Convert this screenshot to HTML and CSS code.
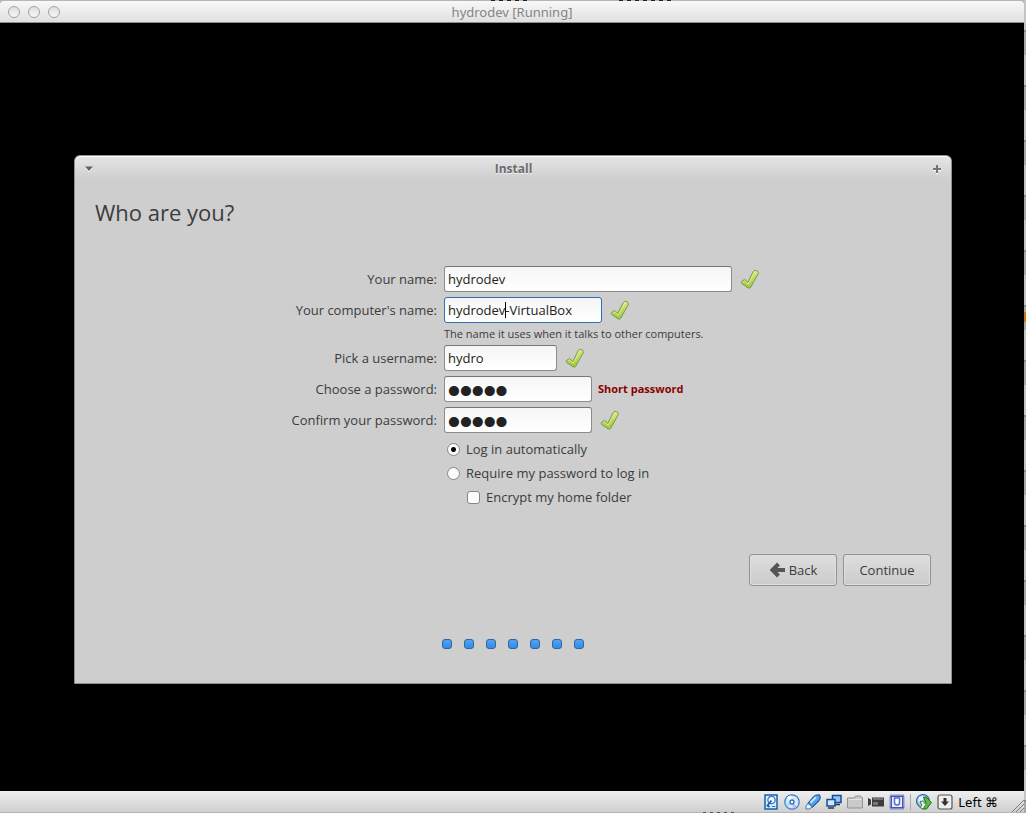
FILE: index.html
```
<!DOCTYPE html>
<html lang="en">
<head>
<meta charset="utf-8">
<title>hydrodev [Running]</title>
<link rel="stylesheet" href="styles.css">
</head>
<body>
<svg class="defs" aria-hidden="true">
  <defs>
    <linearGradient id="leaf" x1="0" y1="0" x2="0" y2="1"><stop offset="0" stop-color="#d9ec7c"/><stop offset="1" stop-color="#a3c639"/></linearGradient>
    <symbol id="tick" viewBox="0 0 20 20"><path d="M1.5 12.500 L4.500 10.400 L7.800 13.400 L13.200 2.600 Q14.400 .8 16 1.600 L18 2.600 Q18.800 3.400 18 5 L10.600 18.400 Q9.400 19.800 8 18.700 L1.800 14.600 Q.8 13.500 1.500 12.500Z" fill="url(#leaf)" stroke="#76994f" stroke-width="1"/><path d="M3 13 L4.600 11.800 L8.200 15.200 L14.600 3.200 L16.400 3" fill="none" stroke="#e2f09c" stroke-width=".8"/></symbol>
  </defs>
</svg>
<div class="vm">
  <header class="vm-title">
    <div class="lights">
      <button class="light" type="button" aria-label="Close"></button>
      <button class="light" type="button" aria-label="Minimize"></button>
      <button class="light" type="button" aria-label="Zoom"></button>
    </div>
    <span class="vm-name">hydrodev [Running]</span>
  </header>

  <main class="screen">
    <section class="dialog">
      <div class="dialog-title">
        <button class="chrome-button" type="button" aria-label="Window menu"><svg width="9" height="6" viewBox="0 0 9 6"><path d="M0 1.500h8L4 6z" fill="#fff"/><path d="M0 .5h8L4 5z" fill="#626262"/></svg></button>
        <h2 class="dialog-name">Install</h2>
        <button class="chrome-button" type="button" aria-label="Maximize"><svg width="8" height="9" viewBox="0 0 8 9"><path d="M3 1h2v3h3v2H5v3H3V6H0V4h3z" fill="#fff"/><path d="M3 0h2v3h3v2H5v3H3V5H0V3h3z" fill="#747474"/></svg></button>
      </div>
      <form class="install">
        <h1 class="heading">Who are you?</h1>
        <div class="fields">
          <label class="label" for="name">Your name:</label>
          <div class="row"><input class="text wide" id="name" type="text" value="hydrodev"><svg class="tick"><use href="#tick"/></svg></div>

          <label class="label" for="host">Your computer's name:</label>
          <div class="row"><span class="caret-box"><input class="text host focused" id="host" type="text" value="hydrodev-VirtualBox"><span class="caret"></span></span><svg class="tick"><use href="#tick"/></svg></div>
          <p class="hint">The name it uses when it talks to other computers.</p>

          <label class="label" for="user">Pick a username:</label>
          <div class="row"><input class="text user" id="user" type="text" value="hydro"><svg class="tick"><use href="#tick"/></svg></div>

          <label class="label" for="pass">Choose a password:</label>
          <div class="row message"><input class="text secret" id="pass" type="password" value="hydro"><strong class="warning">Short password</strong></div>

          <label class="label" for="confirm">Confirm your password:</label>
          <div class="row"><input class="text secret" id="confirm" type="password" value="hydro"><svg class="tick"><use href="#tick"/></svg></div>

          <div class="options">
            <label class="option"><input class="choice radio" type="radio" name="login" checked>Log in automatically</label>
            <label class="option"><input class="choice radio" type="radio" name="login">Require my password to log in</label>
            <label class="option nested"><input class="choice" type="checkbox">Encrypt my home folder</label>
          </div>
        </div>
        <div class="actions">
          <button class="button" type="button"><svg width="16" height="16" viewBox="0 0 16 16"><path d="M9.500 2 3.500 8l6 6M4 8H16" fill="none" stroke="#555" stroke-width="4"/></svg>Back</button>
          <button class="button" type="button">Continue</button>
        </div>
        <div class="steps"><i class="step"></i><i class="step"></i><i class="step"></i><i class="step"></i><i class="step"></i><i class="step"></i><i class="step"></i></div>
      </form>
    </section>
  </main>

  <footer class="status">
    <svg class="device" viewBox="0 0 16 16"><rect x="2" y="1" width="12" height="14" fill="#d7ecfc" stroke="#1a5fae" stroke-width="1.500"/><circle cx="8.500" cy="6" r="3.600" fill="#fff" stroke="#2e7ac6" stroke-width="1.300"/><path d="M8.500 6.500 4.500 11.500l2 1.500" fill="none" stroke="#1a5fae" stroke-width="1.800"/><path d="M9 12.500h3.500" stroke="#2e7ac6"/></svg>
    <svg class="device" viewBox="0 0 16 16"><circle cx="8" cy="8" r="7.200" fill="#d5eaff" stroke="#3575bd" stroke-width="1.200"/><path d="M8 8 3 3.500A7 7 0 0 1 7 1.600z" fill="#fff"/><path d="M8 8l5 4.500A7 7 0 0 1 9 14.400z" fill="#c7b8f0"/><path d="M8 8 1.600 9A7 7 0 0 0 4 13z" fill="#a8e3e8"/><circle cx="8" cy="8" r="2" fill="#fff" stroke="#3170b8" stroke-width="1.300"/></svg>
    <svg class="device" viewBox="0 0 16 16"><path d="M3 9.500 9 2.500Q11 .5 14.500 1 16 4 14 6.500L7.500 13z" fill="#58a6ea" stroke="#1d5da6" stroke-width="1.200"/><path d="M5.500 8.500 11 3" stroke="#c3e5ff" stroke-width="2"/><path d="M3 9.500 1 12v3h3l3.500-2z" fill="#eaf4fd" stroke="#4277a8"/></svg>
    <svg class="device" viewBox="0 0 16 16"><path d="M6.500 1.500h8.500v7h-8.500z" fill="#8ec8fa" stroke="#174d94" stroke-width="1.500"/><path d="M9 10.500h5" fill="none" stroke="#333" stroke-width="1.500"/><path d="M1 5.500h8v6.500H1z" fill="#cce8ff" stroke="#174d94" stroke-width="1.500"/><path d="M2 14h6" stroke="#333" stroke-width="1.500"/></svg>
    <svg class="device" viewBox="0 0 16 16"><path d="M.5 14V4h7l1-2h5l2 2v10z" fill="#c9c9c9" stroke="#919191"/><path d="M1.500 5.500h13" stroke="#e6e6e6"/></svg>
    <svg class="device" viewBox="0 0 16 16"><path d="M0 4l3 1.500v5L0 12zM4 3.500h12v9H4z" fill="#3d3d3d"/><path d="M5 5h10" stroke="#a7a7a7"/><path d="M5 8h5v3H5z" fill="#777"/></svg>
    <svg class="device" viewBox="0 0 16 16"><rect x="1.500" y="1.500" width="13" height="13" fill="none" stroke="#3443a8" stroke-width="2" stroke-dasharray="1 1"/><rect x="2.500" y="2.500" width="11" height="11" fill="#e6edff" stroke="#4255bd"/><path d="M5.500 4v4.500Q5.500 11 8 11t2.500-2.500V4z" fill="#fff" stroke="#5a6cc6" stroke-width="1.500"/></svg>
    <span class="divider"></span>
    <svg class="device" viewBox="0 0 16 16"><circle cx="7" cy="7" r="6.500" fill="#93c4f0" stroke="#2d64a8" stroke-width="1.100"/><path d="M3 3l4-1 1 3-4 4-2-2z" fill="#e7f4ff"/><path d="M7.500 3.500 10 3l5.500 5.500-5 6.500H6.500l3.500-6z" fill="#5fb946" stroke="#256d23"/><path d="M4 7.500l2.500-.5 3.500 3.500-3 4.500-3-1.500L6 11z" fill="#eaf8df" stroke="#3c8134"/></svg>
    <svg class="device" viewBox="0 0 16 16"><rect x="1" y="1" width="14" height="14" rx="2" fill="#eee" stroke="#565656" stroke-width="1.200"/><path d="M6.500 4h3v3.500H12L8 12 4 7.500h2.500z" fill="#333"/></svg>
    <span class="host-key">Left ⌘</span>
    <svg class="grip" viewBox="0 0 13 13"><path d="M1 13 13 1M5 13l8-8M9 13l4-4" stroke="#7c7c7c"/></svg>
  </footer>
</div>
</body>
</html>
```
FILE: styles.css
```
* { box-sizing: border-box; }

body {
  margin: 0;
  height: 100vh;
  padding: 1px 2px 1px 0;
  background:
    repeating-linear-gradient(90deg, #222 0 4px, #bbb 4px 8px) 491px 0 / 40px 1px no-repeat,
    repeating-linear-gradient(90deg, #222 0 4px, #bbb 4px 8px) 619px 0 / 56px 1px no-repeat,
    repeating-linear-gradient(90deg, #555 0 3px, #bbb 3px 7px) 703px 100% / 32px 1px no-repeat,
    linear-gradient(#c87b18, #c87b18) 100% 312px / 2px 10px no-repeat,
    repeating-linear-gradient(#c4c4c4 0 30px, #8c8c8c 30px 32px, #a9a9a9 32px 55px) 100% 0 / 2px 100% no-repeat,
    #b5b5b5;
  color: #3c3c3c;
  font: 13px/18px "Open Sans", "Noto Sans", sans-serif;
}

button, input { font: inherit; color: inherit; margin: 0; }
h1, h2, p { margin: 0; font-weight: normal; }
svg { display: block; flex: none; }
.defs { position: absolute; width: 0; height: 0; }

.vm { height: 100%; display: flex; flex-direction: column; }

.vm-title {
  flex: none;
  height: 22px;
  padding: 0 8px;
  display: grid;
  grid-template-columns: 1fr auto 1fr;
  align-items: center;
  border-bottom: 1px solid #8d8d8d;
  border-radius: 4px 4px 0 0;
  background: linear-gradient(#f8f8f8, #e0e0e0);
}
.lights { display: flex; gap: 8px; }
.light {
  width: 12px;
  height: 12px;
  padding: 0;
  border: 1px solid #a2a2a2;
  border-radius: 50%;
  background: linear-gradient(#dedede, #f8f8f8);
}
.vm-name { color: #858585; font-family: "Noto Sans", sans-serif; }

.screen {
  flex: 1;
  min-height: 0;
  padding: 25px 72px 0 74px;
  display: flex;
  align-items: center;
  background: #000;
}

.dialog {
  flex: 1;
  border: 1px solid #919191;
  border-radius: 6px 6px 0 0;
  background: linear-gradient(#e6e6e6, #cecece 24px);
  box-shadow: inset 0 1px #fff;
}
.dialog-title {
  height: 26px;
  padding: 0 10px;
  display: flex;
  align-items: center;
  justify-content: space-between;
}
.dialog-name { color: #6c6c6c; font-size: 12px; font-weight: bold; text-shadow: 0 1px #eee; }
.chrome-button { padding: 0; border: 0; background: none; }

.install { padding: 13px 20px 34px; }
.heading { font-size: 22px; line-height: 34px; }

.fields {
  margin-top: 37px;
  display: grid;
  grid-template-columns: minmax(0, 342fr) minmax(0, 487fr);
  column-gap: 7px;
  row-gap: 5px;
  align-items: center;
}
.label { text-align: right; }
.row { display: flex; align-items: center; gap: 8px; }
.message { gap: 6px; }
.text {
  height: 26px;
  padding: 0 3px;
  border: 1px solid #8c8c8c;
  border-top-color: #777;
  border-radius: 3px;
  background: linear-gradient(#f6f6f6, #fff);
  color: #222;
  outline: none;
}
.wide { width: 288px; }
.host { width: 158px; display: block; }
.user { width: 113px; }
.secret {
  width: 148px;
  padding-top: 5px;
  font: 34px/24px "Liberation Serif", serif;
  -webkit-text-stroke: 2px #222;
}
.focused { border-color: #2e6fb7; }
.caret-box { position: relative; }
.caret { position: absolute; left: 61px; top: 5px; width: 1px; height: 16px; background: #000; }
.tick { width: 20px; height: 20px; }
.hint, .options { grid-column: 2; }
.hint { font-size: 11px; line-height: 12px; }
.warning { color: #8b0000; font-size: 11px; }

.options { padding-top: 2px; display: grid; gap: 6px; justify-items: start; }
.option { display: flex; align-items: center; gap: 6px; padding-left: 3px; }
.nested { padding-left: 23px; }
.choice {
  appearance: none;
  width: 13px;
  height: 13px;
  border: 1px solid #868686;
  border-radius: 3px;
  background: #fcfcfc;
}
.radio { border-radius: 50%; }
.radio:checked { background: radial-gradient(circle, #000 2px, #fcfcfc 3px); }

.actions { margin-top: 48px; display: flex; justify-content: flex-end; gap: 6px; }
.button {
  width: 88px;
  height: 32px;
  display: flex;
  align-items: center;
  justify-content: center;
  gap: 4px;
  border: 1px solid #929292;
  border-radius: 3px;
  background: linear-gradient(#dedede, #cbcbcb);
  box-shadow: inset 0 0 0 1px #dfdfdf;
}

.steps { margin-top: 53px; display: flex; justify-content: center; gap: 12px; }
.step {
  width: 10px;
  height: 10px;
  border: 1px solid #2e64a0;
  border-radius: 3px;
  background: linear-gradient(#55a1f0, #338be8);
}

.status {
  flex: none;
  height: 21px;
  padding-left: 8px;
  display: flex;
  align-items: center;
  justify-content: flex-end;
  gap: 5px;
  background: linear-gradient(#efefef, #cfcfcf);
  color: #000;
}
.device { width: 16px; height: 16px; }
.divider { width: 1px; height: 16px; background: #aaa; }
.host-key { white-space: nowrap; font-family: "Noto Sans", sans-serif; }
.grip { width: 13px; height: 13px; margin-left: 8px; align-self: flex-end; }
```
